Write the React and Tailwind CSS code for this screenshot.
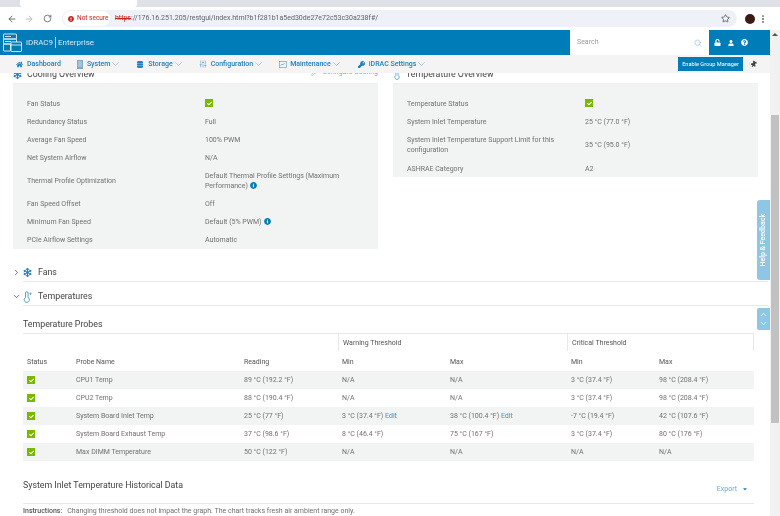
import React from "react";
import { ArrowLeft, ArrowRight, RotateCw, Star, EllipsisVertical, ChevronDown, ChevronRight, ChevronUp, Search, SlidersVertical, Wrench } from "lucide-react";
import { FaHome, FaDatabase, FaUser, FaQuestionCircle, FaInfoCircle, FaCheck, FaKey, FaThumbtack, FaSnowflake, FaCaretDown, FaExclamationCircle, FaUnlock } from "react-icons/fa";

const Status = () => (
  <span className="inline-flex w-[8px] h-[8px] items-center justify-center bg-[#7ab800]">
    <FaCheck className="text-white w-[5px] h-[5px]" />
  </span>
);
const Info = () => <FaInfoCircle className="inline-block w-[7px] h-[7px] text-[#007db8] ml-[2px] align-[-1px]" />;

const Logo = () => (
  <svg width="19" height="20" viewBox="0 0 19 20" fill="none" stroke="white" strokeWidth="0.8" className="shrink-0">
    <rect x="0.5" y="1" width="13" height="5" rx="0.5" />
    <rect x="0.5" y="6" width="13" height="5" rx="0.5" />
    <rect x="0.5" y="11" width="7" height="7" rx="0.5" />
    <rect x="8" y="9" width="10.5" height="9.5" rx="0.5" fill="#007db8" />
    <path d="M8 12h10.5" />
    <path d="M2 3.5h6M2 8.5h6" />
  </svg>
);
const SystemIcon = () => (
  <svg width="6" height="9" viewBox="0 0 6 9" className="shrink-0">
    <rect x="0" y="0" width="6" height="9" fill="#7fa9c4" />
    <path d="M1 2h4M1 4h4M1 6h4" stroke="#f4f4f4" strokeWidth="0.7" />
  </svg>
);
const MaintIcon = () => (
  <svg width="8" height="7" viewBox="0 0 8 7" fill="none" stroke="#6ea3c4" strokeWidth="0.7" className="shrink-0">
    <rect x="0.4" y="0.4" width="7.2" height="6.2" />
    <path d="M1.5 5l1.5-2 1 1 1.5-2" />
  </svg>
);
const ThermoIcon = ({ w = 10, h = 12 }) => (
  <svg width={w} height={h} viewBox="0 0 10 12" fill="none" stroke="#3f95c7" strokeWidth="0.9" className="shrink-0">
    <path d="M2.5 6.5V2a1.3 1.3 0 0 1 2.6 0v4.5a2.6 2.6 0 1 1-2.6 0z" />
    <path d="M7.5 1.5v2.4M6.3 2.7h2.4" strokeWidth="0.7" />
  </svg>
);
const NavChevron = () => (
  <svg width="7" height="4" viewBox="0 0 7 4" fill="none" stroke="#7fb6d8" strokeWidth="0.6" className="ml-[2px] shrink-0">
    <path d="M0.3 0.4L3.5 3.4L6.7 0.4" />
  </svg>
);

const Item = ({ icon, label, chevron = true, cls = "", w = "w-[11px]" }) => (
  <div className={`flex items-center ${cls}`}>
    <span className={`flex ${w} shrink-0`}>{icon}</span>
    <span className="font-medium pt-[1px]">{label}</span>
    {chevron && <NavChevron />}
  </div>
);

const KV = ({ k, v, h = "h-[18px]" }) => (
  <div className={`grid grid-cols-[178px_1fr] items-center pt-[1px] ${h}`}>
    <div className="leading-[10px]">{k}</div>
    <div className="leading-[10px]">{v}</div>
  </div>
);

const cols = "grid grid-cols-[49px_168px_98px_108px_121px_88px_99px] items-center";
const rows = [
  ["CPU1 Temp", "89 °C (192.2 °F)", "N/A", "N/A", "3 °C (37.4 °F)", "98 °C (208.4 °F)"],
  ["CPU2 Temp", "88 °C (190.4 °F)", "N/A", "N/A", "3 °C (37.4 °F)", "98 °C (208.4 °F)"],
  ["System Board Inlet Temp", "25 °C (77 °F)", "3 °C (37.4 °F)|", "38 °C (100.4 °F)|", "-7 °C (19.4 °F)", "42 °C (107.6 °F)"],
  ["System Board Exhaust Temp", "37 °C (98.6 °F)", "8 °C (46.4 °F)", "75 °C (167 °F)", "3 °C (37.4 °F)", "80 °C (176 °F)"],
  ["Max DIMM Temperature", "50 °C (122 °F)", "N/A", "N/A", "N/A", "N/A"],
];
const Cell = ({ t }) => {
  const edit = t.endsWith("|");
  return (
    <div className="px-[4px] pt-[1px] whitespace-nowrap">
      {edit ? t.slice(0, -1) : t}
      {edit && <span className="text-[#3f95c7]"> Edit</span>}
    </div>
  );
};

export default function App() {
  return (
    <div className="relative w-[780px] h-[516px] overflow-hidden flex flex-col bg-white font-['Roboto',sans-serif] text-[7px] text-[#707070] blur-[0.3px]">
      {/* browser chrome */}
      <div className="h-[7px] bg-[#dee1e6] shrink-0 flex pl-[20px]">
        <div className="w-[117px] bg-white rounded-b-[3px]" />
      </div>
      <div className="h-[23px] shrink-0 bg-white flex items-center pl-[7px] pr-[6px]">
        <ArrowLeft className="w-[10px] h-[10px] text-[#5f6368]" strokeWidth={2.2} />
        <ArrowRight className="w-[10px] h-[10px] text-[#b5b8bc] ml-[7px]" strokeWidth={2.2} />
        <RotateCw className="w-[9px] h-[9px] text-[#5f6368] ml-[9px]" strokeWidth={2.2} />
        <div className="ml-[10px] w-[675px] h-[17px] rounded-full bg-[#eef1f7] flex items-center">
          <div className="h-[15px] ml-[1px] w-[47px] rounded-full bg-white flex items-center pl-[5px] text-[6.5px] text-[#c5221f] whitespace-nowrap">
            <FaExclamationCircle className="w-[6px] h-[6px] mr-[3px] shrink-0" />
            Not secure
          </div>
          <div className="ml-[5px] text-[7px] text-[#5f6368] whitespace-nowrap">
            <span className="text-[#c5221f] line-through">https</span>://176.16.251.205/restgui/index.html?b1f281b1a5ed30de27e72c53c30a238f#/
          </div>
          <Star className="w-[9px] h-[9px] ml-auto mr-[7px] text-[#5f6368]" strokeWidth={2.4} />
        </div>
        <div className="ml-[8px] w-[10px] h-[10px] rounded-full bg-[#3a1a12]" />
        <EllipsisVertical className="w-[10px] h-[10px] ml-[3px] text-[#5f6368]" strokeWidth={2.5} />
      </div>

      <div className="flex flex-1 min-h-0">
        <div className="relative flex-1 min-w-0 flex flex-col overflow-hidden">
          {/* header */}
          <div className="relative z-10 h-[25px] shrink-0 bg-[#007db8] flex items-stretch text-white">
            <div className="flex items-center pl-[3px] flex-1">
              <Logo />
              <span className="ml-[4px] text-[8px] text-[#d5eaf5]">iDRAC9</span>
              <span className="mx-[2px] h-[11px] w-px bg-[#a9d3e8]" />
              <span className="text-[8px] text-[#d5eaf5]">Enterprise</span>
            </div>
            <div className="w-[139px] bg-white flex items-center pl-[7px] pr-[7px] text-[#9a9a9a] text-[7px]">
              Search
              <Search className="w-[8px] h-[8px] ml-auto text-[#6ab2d8]" strokeWidth={1.5} />
            </div>
            <div className="w-[61px] flex items-center pl-[5px] gap-[7px]">
              <FaUnlock className="w-[7px] h-[7px]" />
              <FaUser className="w-[6px] h-[6px]" />
              <FaQuestionCircle className="w-[7px] h-[7px]" />
            </div>
          </div>
          {/* nav */}
          <div className="relative z-10 h-[18px] shrink-0 bg-[#f4f4f4] flex items-center pl-[16px] text-[#1f80bd] text-[7px]">
            <Item icon={<FaHome className="w-[7px] h-[7px] text-[#1f80bd]" />} label="Dashboard" chevron={false} />
            <Item cls="ml-[16px]" w="w-[10px]" icon={<SystemIcon />} label="System" />
            <Item cls="ml-[18px]" icon={<FaDatabase className="w-[6px] h-[7px] text-[#1f80bd]" />} label="Storage" />
            <Item cls="ml-[17px]" w="w-[12px]" icon={<SlidersVertical className="w-[8px] h-[8px] text-[#4a93c4]" strokeWidth={1.6} />} label="Configuration" />
            <Item cls="ml-[17px]" icon={<MaintIcon />} label="Maintenance" />
            <Item cls="ml-[18px]" icon={<FaKey className="w-[7px] h-[7px] text-[#1f80bd]" />} label="iDRAC Settings" />
            <div className="ml-auto mr-[27px] w-[65px] h-[14px] bg-[#007db8] text-white text-[5.6px] flex items-center justify-center whitespace-nowrap">
              Enable Group Manager
            </div>
            <FaThumbtack className="absolute right-[13px] w-[7px] h-[7px] text-[#444] rotate-[30deg]" />
          </div>

          {/* content */}
          <div className="flex-1 min-h-0 overflow-hidden">
            <div className="grid grid-cols-[365px_365px] gap-x-[15px] pl-[13px] -mt-[7px]">
              <div>
                <div className="h-[18px] flex items-center border-b border-[#efefef] text-[8.8px] text-[#444]">
                  <FaSnowflake className="w-[9px] h-[9px] text-[#1f80bd] mr-[5px]" />
                  Cooling Overview
                  <span className="ml-auto -mt-[5px] flex items-center text-[7px] text-[#6aa9d2]">
                    <Wrench className="w-[7px] h-[7px] mr-[4px]" />
                    Configure Cooling
                  </span>
                </div>
                <div className="bg-[#f2f3f3] pt-[10px] pb-[1px] pl-[14px]">
                  <KV k="Fan Status" v={<Status />} />
                  <KV k="Redundancy Status" v="Full" />
                  <KV k="Average Fan Speed" v="100% PWM" />
                  <KV k="Net System Airflow" v="N/A" />
                  <KV k="Thermal Profile Optimization" h="h-[28px]" v={<>Default Thermal Profile Settings (Maximum Performance)<Info /></>} />
                  <KV k="Fan Speed Offset" v="Off" />
                  <KV k="Minimum Fan Speed" v={<>Default (5% PWM)<Info /></>} />
                  <KV k="PCIe Airflow Settings" v="Automatic" />
                </div>
              </div>
              <div>
                <div className="h-[18px] flex items-center border-b border-[#efefef] text-[8.8px] text-[#444]">
                  <span className="mr-[3px] flex"><ThermoIcon w={10} h={10} /></span>
                  Temperature Overview
                </div>
                <div className="bg-[#f2f3f3] pt-[10px] pl-[14px]">
                  <KV k="Temperature Status" v={<Status />} />
                  <KV k="System Inlet Temperature" v="25 °C (77.0 °F)" />
                  <KV k="System Inlet Temperature Support Limit for this configuration" h="h-[29px]" v="35 °C (95.0 °F)" />
                  <KV k="ASHRAE Category" v="A2" />
                </div>
              </div>
            </div>

            {/* collapsible sections */}
            <div className="mt-[8px] pl-[13px] pr-[2px] text-[8.8px] text-[#444]">
              <div className="flex h-[25px]">
                <ChevronRight className="w-[9px] h-[9px] mt-[11px] -ml-[1px] mr-[2px] text-[#444]" strokeWidth={2} />
                <div className="flex-1 flex items-center border-b border-[#e8e8e8] pt-[7px]">
                  <FaSnowflake className="w-[9px] h-[9px] text-[#1f80bd] mr-[6px]" />
                  Fans
                </div>
              </div>
              <div className="flex h-[24px]">
                <ChevronDown className="w-[9px] h-[9px] mt-[10px] -ml-[1px] mr-[2px] text-[#444]" strokeWidth={2} />
                <div className="flex-1 flex items-center border-b border-[#e8e8e8] pt-[6px]">
                  <span className="mr-[5px] flex"><ThermoIcon /></span>
                  Temperatures
                </div>
              </div>
            </div>

            {/* probes */}
            <div className="pl-[23px] w-[754px]">
              <div className="h-[28px] flex items-end pb-[4px] leading-[10px] border-b border-[#e8e8e8] text-[8.8px] text-[#444]">
                Temperature Probes
              </div>
              <div className={`${cols} h-[17px] text-[#555]`}>
                <div className="col-span-3" />
                <div className="col-span-2 h-full flex items-center px-[4px] pt-[1px] border-l border-[#e8e8e8]">Warning Threshold</div>
                <div className="col-span-2 h-full flex items-center px-[4px] pt-[1px] border-l border-r border-[#e8e8e8]">Critical Threshold</div>
              </div>
              <div className={`${cols} h-[20px] pt-[2px] text-[#555]`}>
                {["Status", "Probe Name", "Reading", "Min", "Max", "Min", "Max"].map((t, i) => (
                  <div key={i} className="px-[4px]">{t}</div>
                ))}
              </div>
              {rows.map((r, i) => (
                <div key={i} className={`${cols} h-[18px] ${i % 2 === 0 ? "bg-[#f2f3f3]" : "bg-white"}`}>
                  <div className="px-[4px] flex"><Status /></div>
                  {r.map((t, j) => <Cell key={j} t={t} />)}
                </div>
              ))}
              <div className="h-[43px] flex items-start justify-between border-b border-[#e8e8e8] pt-[19px] leading-[10px] text-[8.8px] text-[#444]">
                <span>System Inlet Temperature Historical Data</span>
                <span className="flex items-center text-[7px] text-[#6aa9d2] mr-[6px] mt-[4px]">
                  Export
                  <FaCaretDown className="w-[6px] h-[6px] ml-[5px] text-[#1f80bd]" />
                </span>
              </div>
              <div className="h-[14px] flex items-center whitespace-nowrap">
                <span className="font-medium text-[#555]">Instructions:</span>
                <span className="ml-[5px]">Changing threshold does not impact the graph. The chart tracks fresh air ambient range only.</span>
              </div>
            </div>
          </div>

          {/* floating tabs */}
          <div className="absolute right-0 top-[170px] w-[13px] h-[80px] rounded-l-[3px] bg-[#8fc6e4] flex items-center justify-center">
            <span className="-rotate-90 whitespace-nowrap text-white text-[7px] font-medium">Help &amp; Feedback</span>
          </div>
          <div className="absolute right-0 top-[278px] w-[13px] h-[22px] rounded-l-[2px] bg-[#8fc6e4] flex flex-col items-center justify-center text-white">
            <ChevronUp className="w-[9px] h-[9px]" strokeWidth={2} />
            <ChevronDown className="w-[9px] h-[9px]" strokeWidth={2} />
          </div>
        </div>

        {/* page scrollbar */}
        <div className="w-[10px] shrink-0 bg-[#f1f1f1] flex flex-col items-center">
          <div className="mt-[3px] w-0 h-0 border-x-[3px] border-x-transparent border-b-[3px] border-b-[#555]" />
          <div className="mt-[79px] w-[8px] h-[308px] bg-[#c1c1c1]" />
        </div>
      </div>
    </div>
  );
}
